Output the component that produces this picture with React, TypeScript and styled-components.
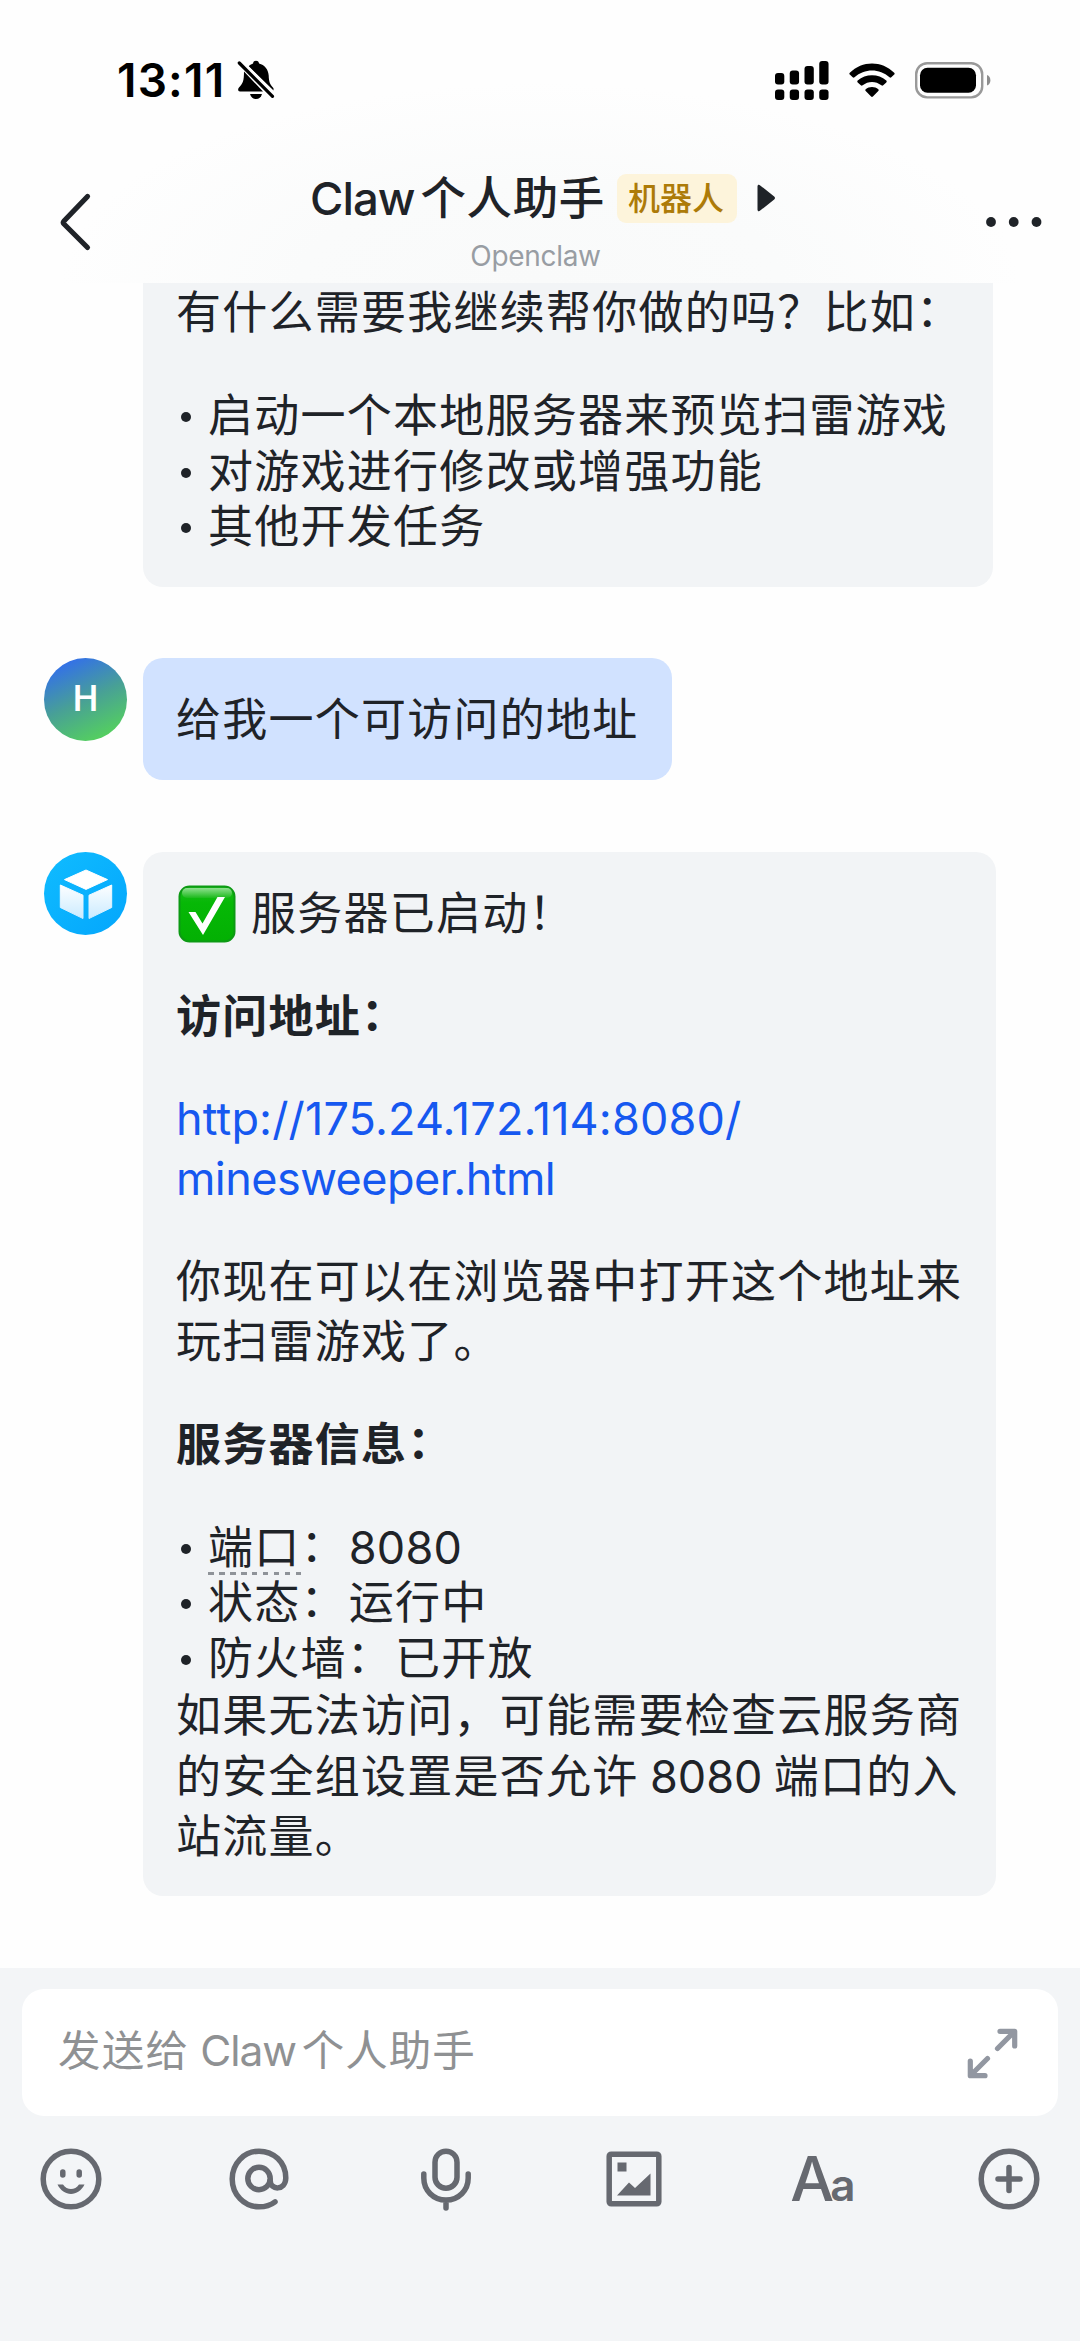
import React from 'react';
import styled, { createGlobalStyle } from 'styled-components';

const GlobalStyle = createGlobalStyle`
  * { box-sizing: border-box; }
  body { margin: 0; background: #fff; }
`;

const fontStack = `Inter, "Noto Sans CJK SC", sans-serif`;

const Screen = styled.div`
  width: 1080px;
  height: 2341px;
  display: flex;
  flex-direction: column;
  overflow: hidden;
  background: #fefefe;
  color: #1f2328;
  font-family: ${fontStack};
`;

const Top = styled.header`
  height: 283px;
  flex: none;
  display: flex;
  flex-direction: column;
  background: radial-gradient(ellipse 480px 200px at 50% 100%, #f9fafa 0%, #fafbfb 50%, #fefefe 100%);
`;

const StatusBar = styled.div`
  height: 130px;
  padding: 30px 89px 0 117px;
  display: flex;
  align-items: center;
  justify-content: space-between;
  color: #000;
`;

const StatusGroup = styled.div<{ $gap: number }>`
  display: flex;
  align-items: center;
  gap: ${(p) => p.$gap}px;
`;

const Clock = styled.span`
  font-size: 46px;
  font-weight: 600;
  line-height: 56px;
  letter-spacing: 1.2px;
`;

const NavBar = styled.div`
  height: 153px;
  padding: 0 38px 0 58px;
  display: grid;
  grid-template-columns: 60px 1fr 60px;
`;

const NavSide = styled.div<{ $end?: boolean }>`
  display: flex;
  height: 110px;
  margin-top: 37px;
  align-items: center;
  justify-content: ${(p) => (p.$end ? 'flex-end' : 'flex-start')};
`;

const NavTitle = styled.div`
  display: flex;
  flex-direction: column;
  align-items: center;
  padding-top: 38px;
`;

const TitleRow = styled.div`
  height: 60px;
  margin-right: 14px;
  display: flex;
  align-items: center;
`;

const Title = styled.h1`
  margin: 0;
  padding-top: 2px;
  font-size: 45.5px;
  font-weight: 500;
  line-height: 60px;
  letter-spacing: -1px;
  white-space: nowrap;
`;

const CjkRun = styled.span<{ $gap: number; $track: number }>`
  margin-left: ${(p) => p.$gap}px;
  letter-spacing: ${(p) => p.$track}px;
`;

const Badge = styled.span`
  height: 49px;
  margin: 1px 20px 0 12px;
  padding: 0 13px 0 11px;
  border-radius: 9px;
  background: #fdf4db;
  color: #ad7b08;
  font-size: 32px;
  font-weight: 500;
  line-height: 49px;
`;

const Subtitle = styled.div`
  margin-top: 11px;
  margin-right: 29px;
  color: #989da3;
  font-size: 28px;
  line-height: 34px;
  letter-spacing: -0.3px;
`;

const Chat = styled.main`
  flex: none;
  height: 1685px;
  display: flex;
  flex-direction: column;
`;

const Message = styled.section<{ $before?: number }>`
  display: flex;
  align-items: flex-start;
  gap: 16px;
  padding-left: 44px;
  margin-top: ${(p) => p.$before ?? 0}px;
`;

const Avatar = styled.div<{ $bg: string }>`
  width: 83px;
  height: 83px;
  flex: none;
  border-radius: 50%;
  display: flex;
  align-items: center;
  justify-content: center;
  background: ${(p) => p.$bg};
  color: #fff;
  font-family: Roboto, sans-serif;
  font-size: 36px;
  font-weight: 500;
  line-height: 81px;
`;

const Bubble = styled.div<{ $w: number; $own?: boolean; $cut?: boolean; $pad: string }>`
  width: ${(p) => p.$w}px;
  padding: ${(p) => p.$pad};
  border-radius: ${(p) => (p.$cut ? '0 0 20px 20px' : '20px')};
  background: ${(p) => (p.$own ? '#d1e2ff' : '#f2f4f6')};
  font-size: 45px;
  line-height: 60.4px;
  letter-spacing: 1.25px;
`;

const Para = styled.p<{ $bold?: boolean; $before?: number }>`
  margin: ${(p) => p.$before ?? 0}px 0 0;
  font-weight: ${(p) => (p.$bold ? 700 : 400)};
  word-spacing: -2.5px;
  white-space: nowrap;
`;

const EmojiPara = styled(Para)`
  display: flex;
  align-items: center;
  gap: 15px;
`;

const Link = styled.a`
  display: block;
  margin-top: 41px;
  color: #1658f0;
  text-decoration: none;
`;

const LinkLine = styled.span<{ $track: number }>`
  display: block;
  letter-spacing: ${(p) => p.$track}px;
`;

const List = styled.ul<{ $before: number }>`
  margin: ${(p) => p.$before}px 0 0;
  padding: 0;
  list-style: none;
`;

const Item = styled.li`
  display: flex;
  align-items: center;
  height: 55.5px;
  line-height: 55.5px;
  white-space: nowrap;
  &::before {
    content: '';
    width: 10px;
    height: 10px;
    margin: 2px 17px 0 5px;
    border-radius: 50%;
    background: #1f2328;
  }
`;

const Colon = styled.span`
  vertical-align: 2px;
  line-height: 0;
`;

const Value = styled.span<{ $track?: number }>`
  margin-left: 2px;
  letter-spacing: ${(p) => p.$track ?? 1.25}px;
`;

const Term = styled.span`
  display: inline-block;
  height: 55px;
  vertical-align: top;
  background: repeating-linear-gradient(90deg, #8f9399 0 5.5px, transparent 5.5px 11px) 0 100% / 93px 3px no-repeat;
`;

const Digits = styled.span`
  letter-spacing: 0;
`;

const Composer = styled.footer`
  flex: 1;
  padding: 21px 22px 0;
  background: #f3f5f7;
`;

const InputBox = styled.div`
  height: 127px;
  padding: 0 40px 0 36px;
  border-radius: 22px;
  background: #fff;
  display: flex;
  align-items: center;
  justify-content: space-between;
  color: #8f9193;
`;

const Placeholder = styled.span`
  padding-bottom: 11px;
  font-size: 42.5px;
  letter-spacing: 1.2px;
  word-spacing: -2px;
`;

const LatinRun = styled.span`
  letter-spacing: -1.1px;
`;

const Tools = styled.div`
  height: 126px;
  padding: 0 18px 0 18px;
  display: flex;
  align-items: center;
  justify-content: space-between;
  color: #666970;
`;

const Tool = styled.button`
  width: 62px;
  height: 64px;
  padding: 0;
  border: 0;
  background: none;
  color: inherit;
  display: flex;
  align-items: baseline;
  justify-content: center;
  font-family: ${fontStack};
`;

const BigA = styled.span`
  font-size: 62px;
  font-weight: 500;
  line-height: 64px;
  letter-spacing: -4px;
`;

const SmallA = styled.span`
  font-size: 44px;
  font-weight: 600;
  letter-spacing: -3px;
`;

const BellOff = () => (
  <svg width="38" height="40" viewBox="0 0 38 40">
    <path d="M11.500 6.500C13 4.600 15 3.800 16 3.400 16.300 1.500 17.400 0.800 19 0.800S21.700 1.500 22.100 3.400C27.500 4.800 31.300 9 31.700 15.500 31.900 22 33 24.500 36.500 28.200V30.500ZM7 11.500 26 31.500H3C1 31.500 0.500 29 2 27.500 6 23.500 7 20.500 7 11.500Z" fill="#000" />
    <path d="M13 34H25C24 37.500 22 39 19 39S14 37.500 13 34Z" fill="#000" />
    <path d="M5 1 38 34" stroke="#fff" strokeWidth="2" />
    <path d="M2.300 3 35.500 36.300" stroke="#000" strokeWidth="3.200" strokeLinecap="round" />
  </svg>
);

const Signal = () => (
  <svg width="54" height="39" viewBox="0 0 54 39">
    {[12, 9.5, 5, 0].map((y, i) => (
      <g key={y}>
        <rect x={i * 14.750} y={y} width="9.300" height={23.500 - y} rx="3" />
        <rect x={i * 14.750} y="28.500" width="9.300" height="10.500" rx="3" />
      </g>
    ))}
  </svg>
);

const Wifi = () => (
  <svg width="46" height="35" viewBox="0 0 46 35">
    <path d="M0.800 9.800C13-2.700 33-2.700 45.200 9.800 45.800 10.500 45.800 11 45.200 11.600L42.300 14.300C41.700 14.900 41.100 14.900 40.500 14.300 30.500 5.200 15.500 5.200 5.500 14.300 4.900 14.900 4.300 14.900 3.700 14.300L0.800 11.600C0.200 11 0.200 10.500 0.800 9.800Z" />
    <path d="M8.700 17.600C16.500 10.400 29.500 10.400 37.300 17.600 37.900 18.200 37.900 18.800 37.300 19.400L34.200 22.200C33.600 22.800 33 22.800 32.400 22.300 26.800 17.800 19.200 17.800 13.600 22.300 13 22.800 12.400 22.800 11.800 22.200L8.700 19.400C8.100 18.800 8.100 18.200 8.700 17.600Z" />
    <path d="M16.700 26.300C20 23.300 26 23.300 29.300 26.300 29.900 26.900 29.900 27.500 29.300 28.100L23.900 33.600C23.300 34.200 22.700 34.200 22.100 33.600L16.700 28.100C16.100 27.500 16.100 26.900 16.700 26.300Z" />
  </svg>
);

const Battery = () => (
  <svg width="76" height="37" viewBox="0 0 76 37">
    <rect x="1.200" y="1.200" width="66" height="34.200" rx="11" fill="none" stroke="#999" strokeWidth="2.400" />
    <rect x="5" y="5.800" width="56" height="25" rx="7.500" />
    <path d="M72 13C76.500 14.500 76.500 22 72 23.500Z" fill="#8e8e8e" />
  </svg>
);

const BackIcon = () => (
  <svg width="34" height="60" viewBox="0 0 34 60" fill="none" stroke="#1f2328" strokeWidth="5.200" strokeLinecap="round" strokeLinejoin="round">
    <path d="M29.500 4.500 6 29Q4.600 30.500 6 32L29.500 55.500" />
  </svg>
);

const MoreIcon = () => (
  <svg width="56" height="12" viewBox="0 0 56 12" fill="#1f2328">
    <circle cx="5" cy="6" r="4.900" />
    <circle cx="27.700" cy="6" r="4.900" />
    <circle cx="50.500" cy="6" r="4.900" />
  </svg>
);

const Triangle = () => (
  <svg width="19" height="28" viewBox="0 0 19 28" fill="#1f2328">
    <path d="M0.500 2.500C0.500 0.500 2 0.200 3.200 1.400L17.200 12.600Q18.800 14 17.200 15.400L3.200 26.600C2 27.800 0.500 27.500 0.500 25.500Z" />
  </svg>
);

const Cube = () => (
  <svg width="56" height="54" viewBox="0 0 56 54">
    <defs>
      <linearGradient id="side" x1="0" y1="0" x2="0" y2="1">
        <stop offset="0" stopColor="#fdfeff" />
        <stop offset="1" stopColor="#cbebff" />
      </linearGradient>
    </defs>
    <path d="M28 3 49.500 12.600 28 22.400 6.500 12.600Z" fill="#fff" stroke="#fff" strokeWidth="1" strokeLinejoin="round" />
    <path d="M2.300 18 25 28.200V51.500L2.300 40.500Z" fill="url(#side)" stroke="url(#side)" strokeWidth="1" strokeLinejoin="round" />
    <path d="M53.700 18 31 28.200V51.500L53.700 40.500Z" fill="url(#side)" stroke="url(#side)" strokeWidth="1" strokeLinejoin="round" />
  </svg>
);

const EmojiSvg = styled.svg`
  margin-left: 2px;
  flex: none;
`;

const CheckEmoji = () => (
  <EmojiSvg width="58" height="58" viewBox="0 0 58 58">
    <defs>
      <linearGradient id="gloss" x1="0" y1="0" x2="0" y2="1">
        <stop offset="0" stopColor="#8fe08f" />
        <stop offset="1" stopColor="#1cba1c" />
      </linearGradient>
      <linearGradient id="face" x1="0" y1="0" x2="0" y2="1">
        <stop offset="0" stopColor="#1dbc1d" />
        <stop offset="0.300" stopColor="#06b806" />
        <stop offset="1" stopColor="#03b003" />
      </linearGradient>
    </defs>
    <rect x="1.500" y="1.500" width="55" height="55" rx="10" fill="url(#face)" stroke="#0d9a14" strokeWidth="2" />
    <rect x="4" y="3" width="50" height="10" rx="5" fill="url(#gloss)" />
    <path d="M10.500 27H17.500L24.500 38.500 39.500 12H47L25 50Z" fill="#fff" />
  </EmojiSvg>
);

const ExpandSvg = styled.svg`
  margin-top: 1px;
`;

const ExpandIcon = () => (
  <ExpandSvg width="51" height="51" viewBox="0 0 51 51" fill="none" stroke="#9297a1" strokeWidth="5.200" strokeLinecap="round" strokeLinejoin="round">
    <path d="M33 3.300H47.700V18M46 5 30.500 20.500M3.300 33V47.700H18M5 46 20.500 30.500" />
  </ExpandSvg>
);

const ToolSvg = ({ children }: { children: React.ReactNode }) => (
  <svg width="62" height="64" viewBox="0 0 62 64" fill="none" stroke="currentColor" strokeWidth="5.500" strokeLinecap="round" strokeLinejoin="round">
    {children}
  </svg>
);

export default function App() {
  return (
    <>
      <GlobalStyle />
      <Screen>
        <Top>
          <StatusBar>
            <StatusGroup $gap={12}>
              <Clock>13:11</Clock>
              <BellOff />
            </StatusGroup>
            <StatusGroup $gap={20}>
              <Signal />
              <Wifi />
              <Battery />
            </StatusGroup>
          </StatusBar>
          <NavBar>
            <NavSide><BackIcon /></NavSide>
            <NavTitle>
              <TitleRow>
                <Title>Claw<CjkRun $gap={6} $track={0.6}>个人助手</CjkRun></Title>
                <Badge>机器人</Badge>
                <Triangle />
              </TitleRow>
              <Subtitle>Openclaw</Subtitle>
            </NavTitle>
            <NavSide $end><MoreIcon /></NavSide>
          </NavBar>
        </Top>

        <Chat>
          <Message>
            <Avatar $bg="transparent" />
            <Bubble $w={850} $cut $pad="0 0 31.7px 33px">
              <Para>有什么需要我继续帮你做的吗？比如<Colon>：</Colon></Para>
              <List $before={45}>
                <Item>启动一个本地服务器来预览扫雷游戏</Item>
                <Item>对游戏进行修改或增强功能</Item>
                <Item>其他开发任务</Item>
              </List>
            </Bubble>
          </Message>

          <Message $before={71.6}>
            <Avatar $bg="linear-gradient(155deg, #316cf0 8%, #48a096 50%, #55d25c 90%)">H</Avatar>
            <Bubble $w={529} $own $pad="32px 0 29.6px 33px">
              <Para>给我一个可访问的地址</Para>
            </Bubble>
          </Message>

          <Message $before={72}>
            <Avatar $bg="linear-gradient(135deg, #10bcff, #04a6fc)"><Cube /></Avatar>
            <Bubble $w={853} $pad="31.5px 0 28.6px 33px">
              <EmojiPara><CheckEmoji /><span>服务器已启动！</span></EmojiPara>
              <Para $bold $before={43}>访问地址<Colon>：</Colon></Para>
              <Link href="#">
                <LinkLine $track={0.15}>http://175.24.172.114:8080/</LinkLine>
                <LinkLine $track={-0.55}>minesweeper.html</LinkLine>
              </Link>
              <Para $before={42.5}>你现在可以在浏览器中打开这个地址来<br />玩扫雷游戏了。</Para>
              <Para $bold $before={42.5}>服务器信息<Colon>：</Colon></Para>
              <List $before={44.3}>
                <Item><span><Term>端口</Term><Colon>：</Colon><Value $track={0.2}>8080</Value></span></Item>
                <Item><span>状态<Colon>：</Colon><Value>运行中</Value></span></Item>
                <Item><span>防火墙<Colon>：</Colon><Value>已开放</Value></span></Item>
              </List>
              <Para>如果无法访问，可能需要检查云服务商<br />的安全组设置是否允许 <Digits>8080</Digits> 端口的入<br />站流量。</Para>
            </Bubble>
          </Message>
        </Chat>

        <Composer>
          <InputBox>
            <Placeholder>发送给 <LatinRun>Claw</LatinRun><CjkRun $gap={6} $track={1}>个人助手</CjkRun></Placeholder>
            <ExpandIcon />
          </InputBox>
          <Tools>
            <Tool aria-label="emoji">
              <ToolSvg>
                <circle cx="31" cy="32" r="27.800" />
                <path d="M22.800 25V28M39.200 25V28" />
                <path d="M17.500 37.500H23C27 43.600 35 43.600 39 37.500H44.500C38.500 50 23.500 50 17.500 37.500Z" fill="currentColor" stroke="none" />
              </ToolSvg>
            </Tool>
            <Tool aria-label="mention">
              <ToolSvg>
                <circle cx="31" cy="31.500" r="11.200" />
                <path d="M42.200 33.500C42.200 43.500 57.500 44 57.800 31 57.800 15 45.500 4.200 31 4.200 16 4.200 4.200 16.500 4.200 32S16 59.800 31 59.800C37 59.800 42.500 58.300 47 54.800" />
              </ToolSvg>
            </Tool>
            <Tool aria-label="voice">
              <ToolSvg>
                <rect x="20" y="4.200" width="22" height="37" rx="11" />
                <path d="M8.800 27V31C8.800 43.500 18.500 53 31 53S53.200 43.500 53.200 31V27M31 53V61" />
              </ToolSvg>
            </Tool>
            <Tool aria-label="image">
              <ToolSvg>
                <rect x="6.200" y="7.200" width="49.600" height="49.600" rx="2" />
                <path d="M14.500 15.500H23.500V24.500H14.500ZM14 48.500 26 35.500 32 41 47.500 26.500V48.500Z" fill="currentColor" stroke="none" />
              </ToolSvg>
            </Tool>
            <Tool aria-label="format"><BigA>A</BigA><SmallA>a</SmallA></Tool>
            <Tool aria-label="more">
              <ToolSvg>
                <circle cx="31" cy="32" r="27.800" />
                <path d="M20 32H42M31 20.500V43.500" />
              </ToolSvg>
            </Tool>
          </Tools>
        </Composer>
      </Screen>
    </>
  );
}
